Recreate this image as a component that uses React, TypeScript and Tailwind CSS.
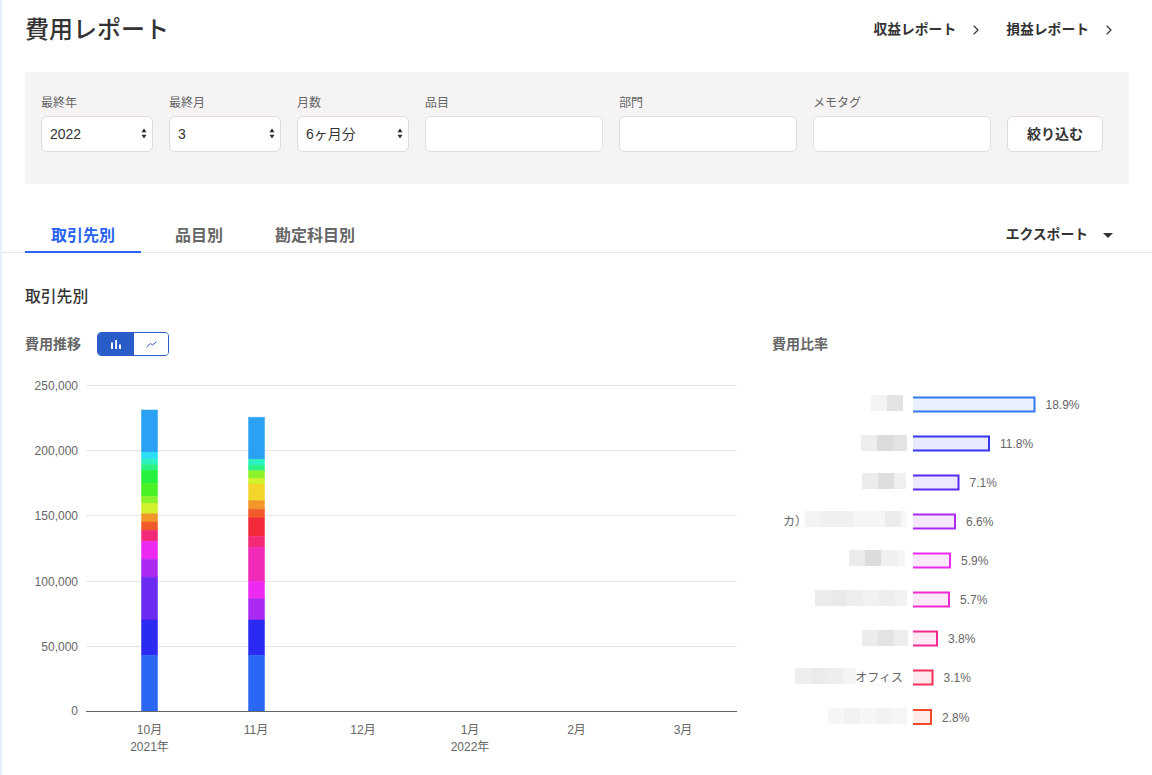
import { ChevronRight } from "lucide-react";

type Segment = [number, string];

const COLORS = {
  sky: "#2aa1f2",
  cyan: "#2ae0f2",
  mint: "#2af2c0",
  spring: "#2af285",
  green: "#24f23f",
  lime: "#48f224",
  apple: "#8cf22a",
  yellowGreen: "#d0f22a",
  yellow: "#f2d62a",
  orange: "#f2982a",
  redOrange: "#f25a2a",
  red: "#f22a3a",
  rose: "#f22a78",
  pink: "#f22ab8",
  magenta: "#ec2af2",
  purple: "#aa2af2",
  violet: "#6a2af2",
  indigo: "#2a2af2",
  blue: "#2a67f2",
};

// [top y of segment, colour], top to bottom. Every bar ends on the axis.
const BAR_OCT: Segment[] = [
  [410, COLORS.sky],
  [452.3, COLORS.cyan],
  [459.3, COLORS.mint],
  [464.3, COLORS.spring],
  [470.3, COLORS.green],
  [483.3, COLORS.lime],
  [496.3, COLORS.apple],
  [503.3, COLORS.yellowGreen],
  [513.7, COLORS.orange],
  [522, COLORS.redOrange],
  [530.3, COLORS.rose],
  [541.3, COLORS.magenta],
  [559.3, COLORS.purple],
  [577.3, COLORS.violet],
  [620, COLORS.indigo],
  [655.3, COLORS.blue],
];

const BAR_NOV: Segment[] = [
  [417.3, COLORS.sky],
  [459.3, COLORS.mint],
  [465.3, COLORS.spring],
  [470.7, COLORS.apple],
  [478.3, COLORS.yellowGreen],
  [484, COLORS.yellow],
  [500.7, COLORS.orange],
  [509.3, COLORS.redOrange],
  [517.7, COLORS.red],
  [536.3, COLORS.rose],
  [547.3, COLORS.pink],
  [581.3, COLORS.magenta],
  [598.7, COLORS.purple],
  [620, COLORS.indigo],
  [655.3, COLORS.blue],
];

const CHART_TOP = 370;
const AXIS_Y = 711.5;

const GRID = [
  { y: 385.5, label: "250,000" },
  { y: 450.5, label: "200,000" },
  { y: 515.5, label: "150,000" },
  { y: 581.5, label: "100,000" },
  { y: 646.5, label: "50,000" },
];

const MONTHS = [
  { x: 149.5, label: "10月", year: "2021年" },
  { x: 256, label: "11月" },
  { x: 363, label: "12月" },
  { x: 470, label: "1月", year: "2022年" },
  { x: 576.5, label: "2月" },
  { x: 683, label: "3月" },
];

type RatioRow = {
  cy: number;
  end: number;
  pct: string;
  color: string;
  top: number;
  start: number;
  blocks: [number, string][];
  text?: string;
  textEnd?: number;
};

// Names in the picture are pixelated out, so they are drawn as grey mosaics.
const RATIOS: RatioRow[] = [
  { cy: 404.5, end: 1035.5, pct: "18.9%", color: "#3478f2", top: 395, start: 871, blocks: [[16, "#f3f3f3"], [16, "#e3e3e3"]] },
  { cy: 443.5, end: 990, pct: "11.8%", color: "#3535f2", top: 435, start: 861, blocks: [[16, "#eeeeee"], [16, "#dcdcdc"], [14, "#e3e3e3"]] },
  { cy: 482.5, end: 959.5, pct: "7.1%", color: "#5a2af2", top: 473, start: 862, blocks: [[16, "#ececec"], [16, "#dedede"], [12, "#efefef"]] },
  { cy: 521.5, end: 956, pct: "6.6%", color: "#aa2af2", top: 511, start: 805, blocks: [[16, "#f3f3f3"], [16, "#f0f0f0"], [16, "#f0f0f0"], [16, "#f5f5f5"], [16, "#f5f5f5"], [16, "#ececec"], [6, "#f8f8f8"]], text: "カ）", textEnd: 807 },
  { cy: 560.5, end: 951, pct: "5.9%", color: "#ec2af2", top: 550, start: 849, blocks: [[16, "#ebebeb"], [16, "#dcdcdc"], [16, "#f0f0f0"], [8, "#f5f5f5"]] },
  { cy: 599.5, end: 950, pct: "5.7%", color: "#f22ad0", top: 590, start: 815, blocks: [[16, "#ebebeb"], [16, "#e9e9e9"], [16, "#eeeeee"], [16, "#f2f2f2"], [16, "#eeeeee"], [12, "#f2f2f2"]] },
  { cy: 638.5, end: 938, pct: "3.8%", color: "#f22a90", top: 630, start: 862, blocks: [[16, "#ececec"], [16, "#e3e3e3"], [14, "#ededed"]] },
  { cy: 677.5, end: 933.5, pct: "3.1%", color: "#f2305a", top: 668, start: 795, blocks: [[16, "#eeeeee"], [16, "#ebebeb"], [16, "#eeeeee"], [13, "#f4f4f4"]], text: "オフィス", textEnd: 903 },
  { cy: 717, end: 932, pct: "2.8%", color: "#f2482a", top: 708, start: 828, blocks: [[16, "#f6f6f6"], [16, "#f1f1f1"], [16, "#f6f6f6"], [16, "#f2f2f2"], [15, "#f5f5f5"]] },
];

function StackedBar({ x, segments }: { x: number; segments: Segment[] }) {
  return (
    <g>
      {segments.map(([top, color], i) => {
        const bottom = i + 1 < segments.length ? segments[i + 1][0] : AXIS_Y;
        return (
          <rect
            key={top}
            x={x}
            y={top - CHART_TOP}
            width={16}
            height={bottom - top}
            fill={color}
            stroke={color}
            strokeOpacity={0.5}
            strokeWidth={1}
          />
        );
      })}
    </g>
  );
}

function TrendChart() {
  return (
    <svg width={747} height={395} viewBox="0 0 747 395" className="block shrink-0">
      {GRID.map((line) => (
        <g key={line.label}>
          <line x1={86} x2={737} y1={line.y - CHART_TOP} y2={line.y - CHART_TOP} stroke="#e6e6e6" />
          <text x={78} y={line.y - CHART_TOP + 4} textAnchor="end" fontSize={12} fill="#666666">
            {line.label}
          </text>
        </g>
      ))}
      <StackedBar x={141.5} segments={BAR_OCT} />
      <StackedBar x={248.5} segments={BAR_NOV} />
      <line x1={86} x2={737} y1={AXIS_Y - CHART_TOP} y2={AXIS_Y - CHART_TOP} stroke="#666666" />
      <text x={78} y={715 - CHART_TOP} textAnchor="end" fontSize={12} fill="#666666">
        0
      </text>
      {MONTHS.map((month) => (
        <g key={month.label}>
          <text x={month.x} y={734 - CHART_TOP} textAnchor="middle" fontSize={12} fill="#666666">
            {month.label}
          </text>
          {month.year ? (
            <text x={month.x} y={751 - CHART_TOP} textAnchor="middle" fontSize={12} fill="#666666">
              {month.year}
            </text>
          ) : null}
        </g>
      ))}
    </svg>
  );
}

function RatioChart() {
  const left = 772;
  return (
    <svg width={380} height={395} viewBox="0 0 380 395" className="block shrink-0">
      {RATIOS.map((row) => {
        const cy = row.cy - CHART_TOP;
        let blockX = row.start - left;
        return (
          <g key={row.pct}>
            {row.blocks.map(([w, fill], i) => {
              const x = blockX;
              blockX += w;
              return <rect key={i} x={x} y={row.top - CHART_TOP} width={w} height={16} fill={fill} />;
            })}
            {row.text ? (
              <text x={(row.textEnd ?? 0) - left} y={cy + 4} textAnchor="end" fontSize={12} fill="#666666">
                {row.text}
              </text>
            ) : null}
            <rect x={913 - left} y={cy - 7} width={row.end - 913 - 1} height={14} fill={row.color} fillOpacity={0.1} />
            <path
              d={`M${913 - left} ${cy - 7}H${row.end - left - 1}V${cy + 7}H${913 - left}`}
              fill="none"
              stroke={row.color}
              strokeWidth={2}
            />
            <text x={row.end - left + 10} y={cy + 4.5} fontSize={12} fill="#666666">
              {row.pct}
            </text>
          </g>
        );
      })}
    </svg>
  );
}

function SelectField({ label, value, options }: { label: string; value: string; options: string[] }) {
  return (
    <label className="block w-[112px]">
      <span className="mb-[3px] block text-xs leading-[19px] text-[#666]">{label}</span>
      <span className="relative block">
        <select
          defaultValue={value}
          className="h-9 w-full appearance-none rounded-md border border-[#dedbd8] bg-white pl-[8px] text-sm text-[#333]"
        >
          {options.map((option) => (
            <option key={option}>{option}</option>
          ))}
        </select>
        <svg width="6" height="11" viewBox="0 0 6 11" className="pointer-events-none absolute right-[6px] top-[12px]">
          <path d="M3 0.5 5.6 4.2H0.4Z M3 10.5 0.4 6.8H5.6Z" fill="#333" />
        </svg>
      </span>
    </label>
  );
}

function TextField({ label }: { label: string }) {
  return (
    <label className="block w-[178px]">
      <span className="mb-[3px] block text-xs leading-[19px] text-[#666]">{label}</span>
      <input className="block h-9 w-full rounded-md border border-[#e3dfd8] bg-white px-2 text-sm" />
    </label>
  );
}

function ReportLink({ label }: { label: string }) {
  return (
    <a className="flex items-center text-[13.8px] font-bold text-[#333]">
      {label}
      <ChevronRight className="ml-[12px] h-4 w-4" strokeWidth={1.75} />
    </a>
  );
}

export default function App() {
  return (
    <div className="h-[775px] w-[1152px] overflow-hidden border-l-2 border-[#e8f0fe] bg-white font-['Liberation_Sans','Noto_Sans_CJK_JP',sans-serif]">
      <header className="flex h-[72px] items-start justify-between pl-[23px] pr-[35px]">
        <h1 className="mt-[12px] text-2xl leading-9 font-medium text-[#333]">費用レポート</h1>
        <div className="mt-[20px] flex gap-[22px]">
          <ReportLink label="収益レポート" />
          <ReportLink label="損益レポート" />
        </div>
      </header>

      <section className="ml-[23px] h-[112px] w-[1104px] bg-[#f5f3f4] px-4 pt-[22px]">
        <div className="flex items-end gap-4">
          <SelectField label="最終年" value="2022" options={["2022", "2021"]} />
          <SelectField label="最終月" value="3" options={["3", "2", "1"]} />
          <SelectField label="月数" value="6ヶ月分" options={["6ヶ月分", "12ヶ月分"]} />
          <TextField label="品目" />
          <TextField label="部門" />
          <TextField label="メモタグ" />
          <button className="h-9 w-24 rounded-md border border-[#dedbd8] bg-white text-sm font-bold text-[#333]">
            絞り込む
          </button>
        </div>
      </section>

      <nav className="mt-[33px] flex h-[36px] items-end justify-between border-b border-[#e5e5e5] pl-[23px] pr-[39px]">
        <div className="flex items-end">
          <a className="-mb-px w-[116px] border-b-2 border-[#2864f0] pb-[3px] text-center text-base leading-6 font-bold text-[#2864f0]">
            取引先別
          </a>
          <a className="ml-[34px] pb-[4px] text-base leading-6 font-bold text-[#666]">品目別</a>
          <a className="ml-[52px] pb-[4px] text-base leading-6 font-bold text-[#666]">勘定科目別</a>
        </div>
        <a className="flex items-center pb-[7px] text-[13.8px] leading-5 font-bold text-[#333]">
          エクスポート
          <svg width="10" height="5" viewBox="0 0 10 5" className="ml-[15px]">
            <path d="M0 0H10L5 5Z" fill="#333" />
          </svg>
        </a>
      </nav>

      <h2 className="mt-[32px] pl-[23px] text-[15.8px] leading-6 font-medium text-[#333]">取引先別</h2>

      <div className="mt-[23px] flex pl-[23px]">
        <div className="flex w-[747px] items-center">
          <span className="text-sm font-bold text-[#666]">費用推移</span>
          <div className="ml-4 flex h-6 w-[72px] overflow-hidden rounded border border-[#2a5cc8]">
            <span className="flex w-9 items-center justify-center bg-[#2a5cc8]">
              <svg width="10" height="10" viewBox="0 0 10 10">
                <path d="M0 3.5H2V10H0Z M4.2 1H6V10H4.2Z M8 5.5H10V10H8Z" fill="#fff" />
              </svg>
            </span>
            <span className="flex flex-1 items-center justify-center bg-white">
              <svg width="11" height="7" viewBox="0 0 11 7">
                <path d="M0.5 6 4.5 2.5 6.5 4 10.5 0.8" fill="none" stroke="#2a5cc8" strokeWidth="1" />
              </svg>
            </span>
          </div>
        </div>
        <span className="text-sm leading-6 font-bold text-[#666]">費用比率</span>
      </div>

      <div className="ml-[-2px] mt-[14px] flex">
        <TrendChart />
        <div className="ml-[25px] shrink-0">
          <RatioChart />
        </div>
      </div>
    </div>
  );
}
